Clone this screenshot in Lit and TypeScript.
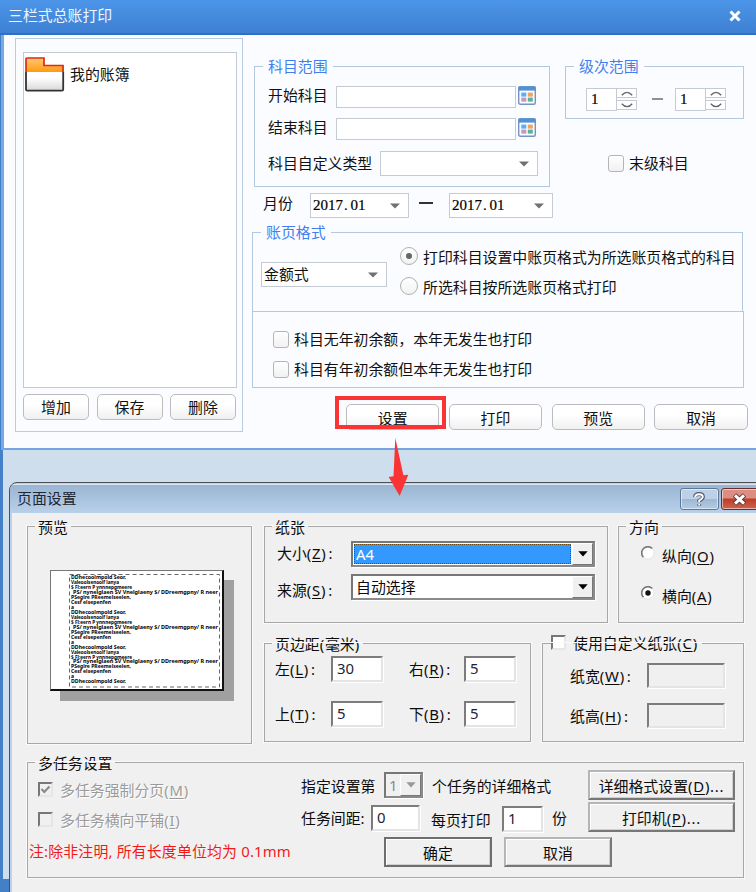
import { LitElement, html, css, svg } from "lit";
import { customElement } from "lit/decorators.js";

const arrow = html`<svg class="arrow" width="10" height="6" viewBox="0 0 10 6"><path d="M0 0.4H10L5 5.6Z" fill="#707070"/></svg>`;
const blackArrow = html`<svg width="10" height="6" viewBox="0 0 10 6"><path d="M0.3 0.3H9.7L5 5.4Z" fill="currentColor"/></svg>`;

const lookup = html`<svg class="lookup" width="18" height="19" viewBox="0 0 18 19">
  <rect x="0.7" y="0.7" width="16.6" height="17.6" rx="1.5" fill="#f8fbff" stroke="#7593c4" stroke-width="1.4"/>
  <path d="M0.5 0.5H17.5V4.6H0.5Z" fill="#5590d4"/>
  <rect x="3.3" y="6.6" width="5" height="4" fill="#55b0f5"/><rect x="9.8" y="6.6" width="5" height="4" fill="#f3a35e"/>
  <rect x="3.3" y="11.6" width="5" height="4" fill="#cf94b4"/><rect x="9.8" y="11.6" width="5" height="4" fill="#58b0a4"/>
</svg>`;

const folder = html`<svg width="40" height="35" viewBox="0 0 40 35">
  <defs>
    <linearGradient id="fo" x1="0" y1="0" x2="0" y2="1"><stop offset="0" stop-color="#ffc977"/><stop offset="1" stop-color="#ff9a10"/></linearGradient>
    <linearGradient id="fw" x1="0" y1="0" x2="0" y2="1"><stop offset="0.3" stop-color="#ffffff"/><stop offset="1" stop-color="#d6d6d6"/></linearGradient>
  </defs>
  <path d="M1 15V2Q1 1 2 1H19V8.5H38.6V15Z" fill="url(#fo)"/>
  <path d="M1 15H38.6V33Q38.6 34 37.6 34H2Q1 34 1 33Z" fill="url(#fw)"/>
  <path d="M1 15V2Q1 1 2 1H19V8.5H38V15" fill="none" stroke="#e02a10" stroke-width="1.7"/>
  <path d="M1 15V32.5Q1 33.7 2.2 33.7H37Q38.2 33.7 38.2 32.5V15" fill="none" stroke="#333" stroke-width="1.8"/>
</svg>`;

const PREVIEW: [string, number][] = [
  ["DDhecoolmpold Seor,", 55],
  ["Valeoolsenoolf lanya", 48],
  ["$ Fl:eern P ynnnepgmeere", 61],
  ["PS/ nynelglaen SV Vnelglaeny $/ DDreemgpny/ R neer", 145],
  ["PSeglre PReemelseelen,", 60],
  ["Cesf elsepenfen", 40],
  ["a", 3],
];

@customElement("app-root")
export class AppRoot extends LitElement {
  static styles = css`
    :host { display: block; width: 756px; height: 892px; overflow: hidden; font: 14.9px "Noto Sans", "Noto Sans CJK SC", sans-serif; color: #111; background: #4380c8; }
    * { box-sizing: border-box; }
    svg { display: block; flex: none; }
    .screen { position: relative; width: 756px; height: 892px; overflow: hidden; }
    .row { display: flex; align-items: flex-start; }
    .t { flex: none; white-space: nowrap; height: 20px; line-height: 18px; }
    .cjk { font-family: "Noto Sans CJK SC", sans-serif; }
    .mn { letter-spacing: .75px; }
    .co { margin-left: 2px; }
    u { text-underline-offset: 2px; text-decoration-thickness: 1px; }

    /* report window */
    .win { height: 450px; width: 756px; padding-left: 4px; background: linear-gradient(90deg, #3f7fca 0 1px, #79a9e2 1px 4px); }
    .bar { display: flex; justify-content: space-between; height: 35px; margin-left: -4px; padding: 6px 15px 0 8px; color: #eef5ff; background: linear-gradient(#4c95e8, #3d80d3); border-bottom: 2px solid #2f70c4; }
    .bar svg { margin-top: 4px; }
    .body { display: flex; height: 415px; background: #fbfcff; border-bottom: 2px solid #75a5e0; }
    .side { width: 228px; height: 394px; margin: 3px 0 0 11px; border: 1px solid #b9cbe0; padding: 13px 0 0 7px; }
    .tree { display: flex; width: 214px; height: 336px; border: 1px solid #c2cad3; background: #fff; padding: 4px 0 0 1px; }
    .tree .t { margin: 8px 0 0 5px; }
    .btn { flex: none; height: 26px; line-height: 24px; text-align: center; border: 1.5px solid #bcbcbc; border-radius: 5px; background: linear-gradient(#fff 40%, #f0f0f1); }
    .side .row { gap: 7.5px; margin-top: 6px; }
    .side .btn { width: 66px; }
    .main { width: 504px; margin-left: 9px; }
    .upper { gap: 15px; padding: 31px 0 0 2px; }
    .fs { border: 1px solid #b4c9de; }
    .lg { width: fit-content; height: 18px; line-height: 18px; margin-top: -10px; padding: 0 5px; background: #fbfcff; color: #3f7ff0; white-space: nowrap; }
    .range { width: 296px; height: 121px; }
    .range .lg { margin-left: 8px; }
    .range .row { padding-left: 13px; }
    .r1 { margin-top: 11px; } .r2 { margin-top: 11px; height: 21px; } .r3 { margin-top: 12px; }
    .r1 { height: 21px; }
    .range .t { width: 68px; }
    .range .r3 .t { width: 112px; margin-top: 3px; }
    .in { flex: none; width: 180px; height: 22px; background: #fff; border: 1.5px solid #c5cbd2; }
    .lookup { margin-left: 2px; }
    .sel { display: flex; flex: none; justify-content: space-between; height: 25px; line-height: 22px; background: #fff; border: 1.5px solid #c5cbd2; padding: 0 8px 0 2px; }
    .sel .arrow { margin-top: 9px; }
    .s1 { width: 158px; } .s2 { width: 99px; } .s3 { width: 104px; } .s4 { width: 126px; }
    .num { font-family: "Liberation Serif", serif; font-size: 15px; color: #000; -webkit-text-stroke: .2px #000; }
    .dot { display: inline-block; width: 7.5px; padding-left: 1px; }
    .level { width: 179px; height: 53px; }
    .level .lg { margin-left: 8px; }
    .level .row { margin: 13px 0 0 20px; }
    .spin { display: flex; width: 51px; height: 22px; }
    .spin .num { width: 32px; height: 23px; line-height: 20px; padding-left: 4px; background: #fff; border: 1.5px solid #c5cbd2; }
    .steps { display: flex; flex-direction: column; gap: 2px; width: 20px; }
    .steps span { display: grid; place-items: center; height: 10px; border: 1px solid #c5cbd2; border-left: 0; background: #fff; }
    .dash { width: 11px; height: 2px; margin: 10px 12px 0 15px; background: #909090; }
    .ck { flex: none; width: 16px; height: 17px; border: 1.5px solid #b5b5b5; border-radius: 3px; background: linear-gradient(#fff, #f1f1f1); }
    .last { margin: 36px 0 0 43px; }
    .ck + .t { margin: -1px 0 0 5px; }
    .month { margin: 6px 0 0 11px; }
    .month .t { width: 47px; margin-top: 1px; }
    .mdash { width: 14px; height: 1.5px; margin: 9px 16px 0 10px; background: #333; }
    .fmt { width: 491px; height: 79px; margin-top: 14px; border-bottom: 0; }
    .fmt .lg { margin-left: 8px; }
    .fmt .row { padding-left: 8px; }
    .fmt .s4 { margin-top: 21px; }
    .rads { margin: 6px 0 0 13px; }
    .fmt .rad { display: flex; height: 30px; }
    .ring { display: grid; place-items: center; flex: none; width: 18px; height: 18px; border: 1.5px solid #b0b0b0; border-radius: 50%; background: linear-gradient(#fff, #f2f2f2); }
    .ring i { width: 6px; height: 6px; border-radius: 50%; background: #666; }
    .rad .t { margin: 1px 0 0 5px; }
    .opts { width: 492px; height: 77px; padding: 19px 0 0 20px; }
    .opts .row + .row { margin-top: 11px; }
    .acts { margin: 16px 0 0 94px; gap: 9.5px; }
    .acts .btn { width: 93.3px; line-height: 26px; }
    .mark { position: absolute; left: 335px; top: 396px; width: 111px; height: 33px; border: 4px solid #fa3434; }
    .point { position: absolute; left: 388px; top: 438px; z-index: 3; }

    /* page setup dialog */
    .under { height: 429px; margin-left: 3px; padding: 32px 0 0 6px; background: #cfdeec; }
    .dlg { height: 420px; width: 760px; border: 1.5px solid #4c4f55; border-radius: 8px 0 0 0; background: #bdd2ea; padding: 1px 0 0 2px; overflow: hidden; }
    .cap { display: flex; height: 29px; margin-left: -2px; padding: 4px 0 0 7px; background: linear-gradient(#9ab5d2, #b9d0ea); border-top: 1px solid #dbe7f3; color: #1d2735; }
    .cap .t { width: 662.5px; }
    .help, .close { display: grid; place-items: center; height: 22px; margin-top: -1px; border: 1.5px solid #5c7898; border-radius: 3px; background: linear-gradient(#bdd0e6 48%, #9db7d4 50%, #b4cbe4); box-shadow: inset 0 0 0 1px #ffffff88; }
    .help { width: 39px; }
    .close { width: 42px; margin-left: 2px; border-color: #6a2d2d; background: linear-gradient(#dc8e82 45%, #bd3d27 50%, #cc6450); padding-right: 4px; }
    .pane { height: 390px; background: #f0f0f0; padding: 13px 0 0 15px; font-size: 14.9px; color: #0c0c0c; }
    .g { border: 1px solid #a7a7a7; outline: 1px solid #fafafa; flex: none; }
    .pane .lg { background: #f0f0f0; color: #0c0c0c; padding: 0 3px; margin: -9px 0 0 7px; }
    .pv { width: 225px; height: 218px; }
    .sheet { width: 174px; height: 121px; margin: 34px 0 0 22px; background: #fff; border: 1px solid #777; border-right: 2px solid #111; border-bottom: 2px solid #111; box-shadow: 10px 10px 0 #a0a0a0; }
    .cols { gap: 12px; }
    .two { display: flex; gap: 10px; }
    .two + .two { gap: 11.5px; }
    .right { display: flex; flex-direction: column; gap: 20px; }
    .paper { width: 344px; height: 97px; }
    .paper .row { padding-left: 12px; }
    .paper .t { width: 74px; }
    .cb { display: flex; flex: none; width: 244px; height: 26px; padding: 1px; background: #fff; border: 2px solid #777; border-right-color: #8a8a8a; border-bottom-color: #8a8a8a; line-height: 22px; box-shadow: 1px 1px 0 #fff; }
    .cb .v { flex: 1; padding-left: 2px; height: 20px; line-height: 21px; }
    .hl { background: #3399ff; color: #fff; outline: 1px dotted #6b4a15; outline-offset: -1px; }
    .dd { display: grid; place-items: center; width: 21px; height: 22px; margin: -1px -1px 0 1px; background: #f0f0f0; border: 1px solid #fff; border-right-color: #777; border-bottom-color: #777; color: #000; }
    .orient { width: 126px; height: 97px; }
    .orient .rad { display: flex; padding-left: 22px; height: 40px; }
    .orient .rad .t { margin: 1px 0 0 7px; }
    .margin { width: 266.5px; height: 99px; }
    .margin .row { padding-left: 10px; }
    .ti { flex: none; width: 52px; height: 26px; background: #fff; border: 2px solid; border-color: #7c7c7c #e4e4e4 #e4e4e4 #7c7c7c; box-shadow: 1px 1px 0 #fff; padding-left: 4px; line-height: 21px; color: #1e1e38; }
    .margin .t { width: 56px; margin-top: 4px; }
    .margin .ti + .t { margin-left: 26px; width: 55px; }
    .custom { width: 202px; height: 99px; }
    .custom .lg { display: flex; height: 18px; line-height: 16px; margin-left: 8px; padding: 0 4px 0 0; }
    .sq { flex: none; width: 15px; height: 15px; background: #fff; border: 2px solid; border-color: #777 #e6e6e6 #e6e6e6 #777; }
    .custom .sq { margin: 0 7px 0 0; }
    .custom .row { padding-left: 27px; }
    .custom .t { width: 77px; margin-top: 4px; }
    .off { width: 78px; height: 25px; background: #f0f0f0; }
    .multi { display: flex; width: 717px; height: 116px; margin-top: 18px; }
    .tasks { width: 272px; }
    .tasks .row { padding-left: 10px; color: #9b9b9b; text-shadow: 1px 1px 0 #fff; }
    .tasks .sq { background: #f0f0f0; color: #8a8a8a; }
    .tasks .sq + .t { margin-left: 7px; margin-top: -1px; }
    .note { color: #f51818; margin: 11px 0 0 1px; letter-spacing: .17px; }
    .mid { width: 287px; margin-left: 1px; padding-top: 9px; }
    .push { display: block; flex: none; height: 30px; line-height: 28px; text-align: center; white-space: nowrap; background: #f0f0f0; border: 2px solid; border-color: #b5b5b5 #777 #777 #b5b5b5; box-shadow: inset 1px 1px 0 #fff, inset -1px -1px 0 #cfcfcf; }
    .def { border-color: #6e6e6e; }
    .mini { width: 39px; height: 26px; background: #f0f0f0; color: #8a8a8a; }
    .mini .dd { color: #999; }
    .far { display: flex; flex-direction: column; gap: 2px; padding-top: 7px; }
    .far .push { width: 147px; }
    .g1 { margin-top: 5px; } .g2 { margin-top: 7px; } .g3 { margin-top: 3px; } .g4 { margin-top: 19px; }
    .paper .g2 .t { margin-top: 7px; }
    .c1 { margin-top: 10px; } .c2 { margin-top: 15px; } .o1 { margin-top: 10px; }
    .k1 { margin-top: 10px; } .k2 { margin-top: 11px; }
    .la { width: 83px; margin-top: 5px; } .lb { margin: 5px 0 0 9px; }
    .lc { width: 70px; margin-top: 4px; } .ld { width: 71px; margin: 6px 0 0 11px; } .le { margin: 4px 0 0 9px; }
    .w1 { width: 49px; } .w2 { width: 41px; margin-top: 1px; }
    .m2 { margin-top: 7px; } .m3 { margin: 5px 0 0 83px; gap: 12px; }
    .m3 .push { width: 108px; line-height: 29px; }
  `;

  private spinner(v: string) {
    return html`<div class="spin"><span class="num">${v}</span><span class="steps">
      <span><svg width="12" height="5" viewBox="0 0 12 5"><path d="M0.8 4.3Q6-1.6 11.2 4.3" fill="none" stroke="#666" stroke-width="1.4"/></svg></span>
      <span><svg width="12" height="5" viewBox="0 0 12 5"><path d="M0.8 .7Q6 6.6 11.2 .7" fill="none" stroke="#666" stroke-width="1.4"/></svg></span></span></div>`;
  }

  private month(cls: string) {
    return html`<div class="sel ${cls}"><span class="num">2017<span class="dot">.</span>01</span>${arrow}</div>`;
  }

  private mn(text: string, key: string, end = "") {
    return html`${text}<span class="mn">(<u>${key}</u>)${end === ":" ? html`<span class="co">:</span>` : end}</span>`;
  }

  private ring(on: boolean) {
    return html`<svg width="14" height="14" viewBox="0 0 14 14"><circle cx="7" cy="7" r="6" fill="#fff"/>
      <path d="M2.5 11.3A6.2 6.2 0 0 1 11.3 2.5" fill="none" stroke="#777" stroke-width="1.6"/>
      <path d="M2.5 11.3A6.2 6.2 0 0 0 11.3 2.5" fill="none" stroke="#e4e4e4" stroke-width="1"/>
      ${on ? svg`<circle cx="7" cy="7" r="2.7" fill="#111"/>` : ""}</svg>`;
  }

  render() {
    const lines = Array.from({ length: 22 }, (_, i) => PREVIEW[i % 7]);
    return html`<div class="screen">
      <div class="win">
        <div class="bar"><span class="t cjk">三栏式总账打印</span>
          <svg width="12" height="12" viewBox="0 0 12 12"><path d="M1.5 1.5L10.5 10.5M10.5 1.5L1.5 10.5" stroke="#fff" stroke-width="3"/></svg></div>
        <div class="body">
          <div class="side">
            <div class="tree">${folder}<span class="t">我的账簿</span></div>
            <div class="row"><div class="btn">增加</div><div class="btn">保存</div><div class="btn">删除</div></div>
          </div>
          <div class="main">
            <div class="row upper">
              <div class="fs range">
                <div class="lg">科目范围</div>
                <div class="row r1"><span class="t">开始科目</span><div class="in"></div>${lookup}</div>
                <div class="row r2"><span class="t">结束科目</span><div class="in"></div>${lookup}</div>
                <div class="row r3"><span class="t">科目自定义类型</span><div class="sel s1"><span></span>${arrow}</div></div>
              </div>
              <div>
                <div class="fs level">
                  <div class="lg">级次范围</div>
                  <div class="row">${this.spinner("1")}<div class="dash"></div>${this.spinner("1")}</div>
                </div>
                <div class="row last"><div class="ck"></div><span class="t">末级科目</span></div>
              </div>
            </div>
            <div class="row month"><span class="t">月份</span>${this.month("s2")}<div class="mdash"></div>${this.month("s3")}</div>
            <div class="fs fmt">
              <div class="lg">账页格式</div>
              <div class="row"><div class="sel s4"><span>金额式</span>${arrow}</div>
                <div class="rads">
                  <div class="rad"><span class="ring"><i></i></span><span class="t">打印科目设置中账页格式为所选账页格式的科目</span></div>
                  <div class="rad"><span class="ring"></span><span class="t">所选科目按所选账页格式打印</span></div>
                </div></div>
            </div>
            <div class="fs opts">
              <div class="row"><div class="ck"></div><span class="t">科目无年初余额，本年无发生也打印</span></div>
              <div class="row"><div class="ck"></div><span class="t">科目有年初余额但本年无发生也打印</span></div>
            </div>
            <div class="row acts"><div class="btn">设置</div><div class="btn">打印</div><div class="btn">预览</div><div class="btn">取消</div></div>
          </div>
        </div>
      </div>
      <div class="mark"></div>
      <svg class="point" width="22" height="60" viewBox="0 0 22 60"><path d="M7.3 0L15.4 37.3L20.3 36.8L11.7 58L0.7 39L5.5 38.3Z" fill="#fa3434"/></svg>
      <div class="under"><div class="dlg">
        <div class="cap"><span class="t">页面设置</span>
          <div class="help"><svg width="12" height="15" viewBox="0 0 12 15"><path d="M2 5Q2 2 6 2Q10 2 10 5Q10 6.8 6.2 8.6V10M6.2 12V13.8" fill="none" stroke="#4c5c74" stroke-width="3.8"/><path d="M2.2 5Q2.4 2.2 6 2.2Q9.8 2.2 9.8 5Q9.6 6.8 6.2 8.6V10M6.2 12V13.4" fill="none" stroke="#fff" stroke-width="1.9"/></svg></div>
          <div class="close"><svg width="15" height="13" viewBox="0 0 15 13"><path d="M2.5 2L12.5 11M12.5 2L2.5 11" stroke="#5b3838" stroke-width="5"/><path d="M3 2.4L12 10.6M12 2.4L3 10.6" stroke="#fff" stroke-width="3"/></svg></div>
        </div>
        <div class="pane">
          <div class="row cols">
            <div class="g pv"><div class="lg">预览</div>
              <div class="sheet"><svg width="171" height="118" viewBox="0 0 171 118">
                <rect x="18.5" y="3.5" width="150" height="112.5" fill="none" stroke="#666" stroke-dasharray="4 3"/>
                ${lines.map(([s, w], i) => svg`<text x=${i % 7 === 3 ? 22 : 20} y=${8 + i * 4.97} font-size="4.8" font-weight="700" fill="#000" textLength=${w} lengthAdjust="spacingAndGlyphs">${s}</text>`)}
              </svg></div>
            </div>
            <div class="right">
              <div class="two">
                <div class="g paper"><div class="lg">纸张</div>
                  <div class="row g1"><span class="t g3">${this.mn("大小", "Z", ":")}</span><div class="cb"><span class="v hl">A4</span><span class="dd">${blackArrow}</span></div></div>
                  <div class="row g2"><span class="t">${this.mn("来源", "S", ":")}</span><div class="cb"><span class="v">自动选择</span><span class="dd">${blackArrow}</span></div></div>
                </div>
                <div class="g orient"><div class="lg">方向</div>
                  <div class="rad o1">${this.ring(false)}<span class="t">${this.mn("纵向", "O")}</span></div>
                  <div class="rad">${this.ring(true)}<span class="t">${this.mn("横向", "A")}</span></div>
                </div>
              </div>
              <div class="two">
                <div class="g margin"><div class="lg">页边距<span class="mn">(</span>毫米<span class="mn">)</span></div>
                  <div class="row g3"><span class="t">${this.mn("左", "L", ":")}</span><div class="ti">30</div><span class="t">${this.mn("右", "R", ":")}</span><div class="ti">5</div></div>
                  <div class="row g4"><span class="t">${this.mn("上", "T", ":")}</span><div class="ti">5</div><span class="t">${this.mn("下", "B", ":")}</span><div class="ti">5</div></div>
                </div>
                <div class="g custom"><div class="lg"><span class="sq"></span><span>${this.mn("使用自定义纸张", "C")}</span></div>
                  <div class="row c1"><span class="t">${this.mn("纸宽", "W", ":")}</span><div class="ti off"></div></div>
                  <div class="row c2"><span class="t">${this.mn("纸高", "H", ":")}</span><div class="ti off"></div></div>
                </div>
              </div>
            </div>
          </div>
          <div class="g multi">
            <div class="tasks"><div class="lg">多任务设置</div>
              <div class="row k1"><span class="sq"><svg width="11" height="11" viewBox="0 0 11 11"><path d="M1.5 5L4.3 8L9.5 2.5" fill="none" stroke="currentColor" stroke-width="2.2"/></svg></span><span class="t">${this.mn("多任务强制分页", "M")}</span></div>
              <div class="row k2"><span class="sq"></span><span class="t">${this.mn("多任务横向平铺", "I")}</span></div>
              <div class="t note">注:除非注明, 所有长度单位均为 0.1mm</div>
            </div>
            <div class="mid">
              <div class="row"><span class="t la">指定设置第</span><div class="cb mini"><span class="v">1</span><span class="dd">${blackArrow}</span></div><span class="t lb">个任务的详细格式</span></div>
              <div class="row m2"><span class="t lc">任务间距:</span><div class="ti w1">0</div><span class="t ld">每页打印</span><div class="ti w2">1</div><span class="t le">份</span></div>
              <div class="row m3"><div class="push def">确定</div><div class="push">取消</div></div>
            </div>
            <div class="far"><div class="push">${this.mn("详细格式设置", "D", "...")}</div><div class="push">${this.mn("打印机", "P", "...")}</div></div>
          </div>
        </div>
      </div></div>
    </div>`;
  }
}
